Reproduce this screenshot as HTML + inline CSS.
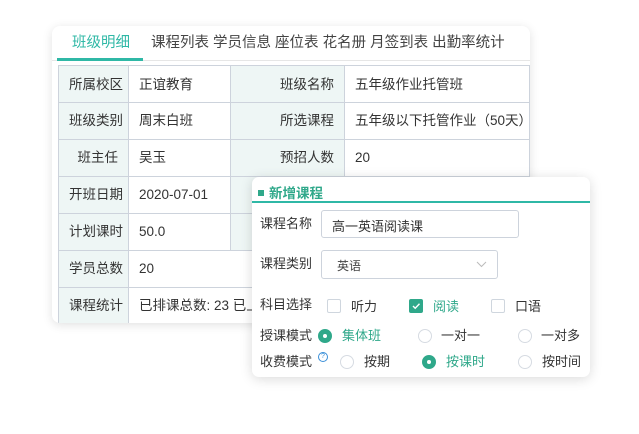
<!DOCTYPE html>
<html><head><meta charset="utf-8"><style>
body{margin:0;width:639px;height:434px;background:#fff;position:relative;overflow:hidden;font-family:"Liberation Sans","Noto Sans CJK SC",sans-serif;font-size:13px;color:#333}
.card1{position:absolute;left:52px;top:26px;width:478px;height:297px;background:#fff;border-radius:8px;box-shadow:0 2px 10px rgba(0,0,0,.12);overflow:hidden}
.tabs{position:absolute;top:0;left:0;height:34px;width:100%;border-bottom:1px solid #e6e6e6}
.tab{position:absolute;top:5px;font-size:14.5px;color:#444}
.ul{position:absolute;left:5px;top:32px;width:86px;height:3px;background:#2fb8a6}
.c{position:absolute;border-right:1px solid #cdd3dc;border-bottom:1px solid #cdd3dc;box-sizing:border-box;line-height:36px;padding:0 10px;white-space:nowrap;overflow:hidden;font-size:13.5px}
.l{background:#eef6f5;color:#333}
.r{text-align:right}
.card2{position:absolute;left:252px;top:177px;width:338px;height:200px;background:#fff;border-radius:7px;box-shadow:0 2px 12px rgba(0,0,0,.15)}
.a{position:absolute;white-space:nowrap;font-size:13px}
.cb{position:absolute;width:12px;height:12px;border:1px solid #cfd6de;border-radius:2px}
.rd{position:absolute;width:12px;height:12px;border:1px solid #d6dbe2;border-radius:50%}
.rd.on{background:#2fa88a;border-color:#2fa88a}
.rd.on::after{content:"";position:absolute;left:4px;top:4px;width:4px;height:4px;border-radius:50%;background:#fff}
.g{color:#2fa88a}
</style></head><body>
<div class="card1">
 <div class="tabs">
  <span class="tab" style="left:20px;color:#2fb8a6">班级明细</span>
  <span class="tab" style="left:99px">课程列表 学员信息 座位表 花名册 月签到表 出勤率统计</span>
  <div class="ul"></div>
 </div>
 <div style="position:absolute;left:6px;top:39px;width:472px;height:1px;background:#cdd3dc"></div>
 <div style="position:absolute;left:6px;top:39px;width:1px;height:260px;background:#cdd3dc"></div>
 <div class="c l" style="left:7px;top:40px;width:70px;height:37px;line-height:38px">所属校区</div>
 <div class="c" style="left:77px;top:40px;width:102px;height:37px;line-height:38px">正谊教育</div>
 <div class="c l r" style="left:179px;top:40px;width:114px;height:37px;line-height:38px">班级名称</div>
 <div class="c" style="left:293px;top:40px;width:185px;height:37px;line-height:38px">五年级作业托管班</div>
 <div class="c l" style="left:7px;top:77px;width:70px;height:37px">班级类别</div>
 <div class="c" style="left:77px;top:77px;width:102px;height:37px">周末白班</div>
 <div class="c l r" style="left:179px;top:77px;width:114px;height:37px">所选课程</div>
 <div class="c" style="left:293px;top:77px;width:185px;height:37px">五年级以下托管作业（50天）</div>
 <div class="c l r" style="left:7px;top:114px;width:70px;height:37px">班主任</div>
 <div class="c" style="left:77px;top:114px;width:102px;height:37px">吴玉</div>
 <div class="c l r" style="left:179px;top:114px;width:114px;height:37px">预招人数</div>
 <div class="c" style="left:293px;top:114px;width:185px;height:37px">20</div>
 <div class="c l" style="left:7px;top:151px;width:70px;height:37px">开班日期</div>
 <div class="c" style="left:77px;top:151px;width:102px;height:37px">2020-07-01</div>
 <div class="c l" style="left:179px;top:151px;width:114px;height:37px"></div>
 <div class="c l" style="left:7px;top:188px;width:70px;height:37px">计划课时</div>
 <div class="c" style="left:77px;top:188px;width:102px;height:37px">50.0</div>
 <div class="c l" style="left:179px;top:188px;width:114px;height:37px"></div>
 <div class="c l" style="left:7px;top:225px;width:70px;height:37px">学员总数</div>
 <div class="c" style="left:77px;top:225px;width:401px;height:37px">20</div>
 <div class="c l" style="left:7px;top:262px;width:70px;height:37px">课程统计</div>
 <div class="c" style="left:77px;top:262px;width:401px;height:37px">已排课总数: 23 已上课 12</div>
</div>
<div class="card2">
 <div class="a" style="left:6px;top:5px;font-weight:bold;color:#2fa88a;font-size:13.5px"><span style="display:inline-block;width:6px;height:6px;background:#2fa88a;margin-right:5px;vertical-align:2px"></span>新增课程</div>
 <div style="position:absolute;left:0;top:24px;width:338px;height:2px;background:#2fb8a6"></div>
 <div class="a" style="left:8px;top:36px">课程名称</div>
 <div style="position:absolute;left:69px;top:33px;width:198px;height:28px;border:1px solid #cdd3dc;border-radius:3px;box-sizing:border-box;padding:5px 10px;font-size:13px">高一英语阅读课</div>
 <div class="a" style="left:8px;top:76px">课程类别</div>
 <div style="position:absolute;left:69px;top:73px;width:177px;height:29px;border:1px solid #cdd3dc;border-radius:3px;box-sizing:border-box;padding:6px 15px;font-size:12px;color:#444">英语<svg style="position:absolute;right:10px;top:10px" width="11" height="7"><path d="M1 1l4.5 4.5L10 1" stroke="#bbb" fill="none"/></svg></div>
 <div class="a" style="left:8px;top:117px">科目选择</div>
 <div class="cb" style="left:75px;top:122px"></div><div class="a" style="left:99px;top:119px">听力</div>
 <div class="cb" style="left:157px;top:122px;background:#2fa88a;border-color:#2fa88a"><svg width="12" height="12" style="position:absolute;left:0;top:0"><path d="M3 6l2.2 2.2L9.5 3.8" stroke="#fff" stroke-width="1.4" fill="none"/></svg></div><div class="a g" style="left:181px;top:119px">阅读</div>
 <div class="cb" style="left:239px;top:122px"></div><div class="a" style="left:263px;top:119px">口语</div>
 <div class="a" style="left:8px;top:148px">授课模式</div>
 <div class="rd on" style="left:66px;top:152px"></div><div class="a g" style="left:90px;top:148px">集体班</div>
 <div class="rd" style="left:166px;top:152px"></div><div class="a" style="left:189px;top:148px">一对一</div>
 <div class="rd" style="left:266px;top:152px"></div><div class="a" style="left:289px;top:148px">一对多</div>
 <div class="a" style="left:8px;top:174px">收费模式</div>
 <div style="position:absolute;left:66px;top:175px;width:8px;height:8px;border:1px solid #3a8fd8;border-radius:50%;font-size:7px;line-height:8px;text-align:center;color:#3a8fd8">?</div>
 <div class="rd" style="left:88px;top:178px"></div><div class="a" style="left:112px;top:174px">按期</div>
 <div class="rd on" style="left:170px;top:178px"></div><div class="a g" style="left:194px;top:174px">按课时</div>
 <div class="rd" style="left:266px;top:178px"></div><div class="a" style="left:290px;top:174px">按时间</div>
</div>
</body></html>
